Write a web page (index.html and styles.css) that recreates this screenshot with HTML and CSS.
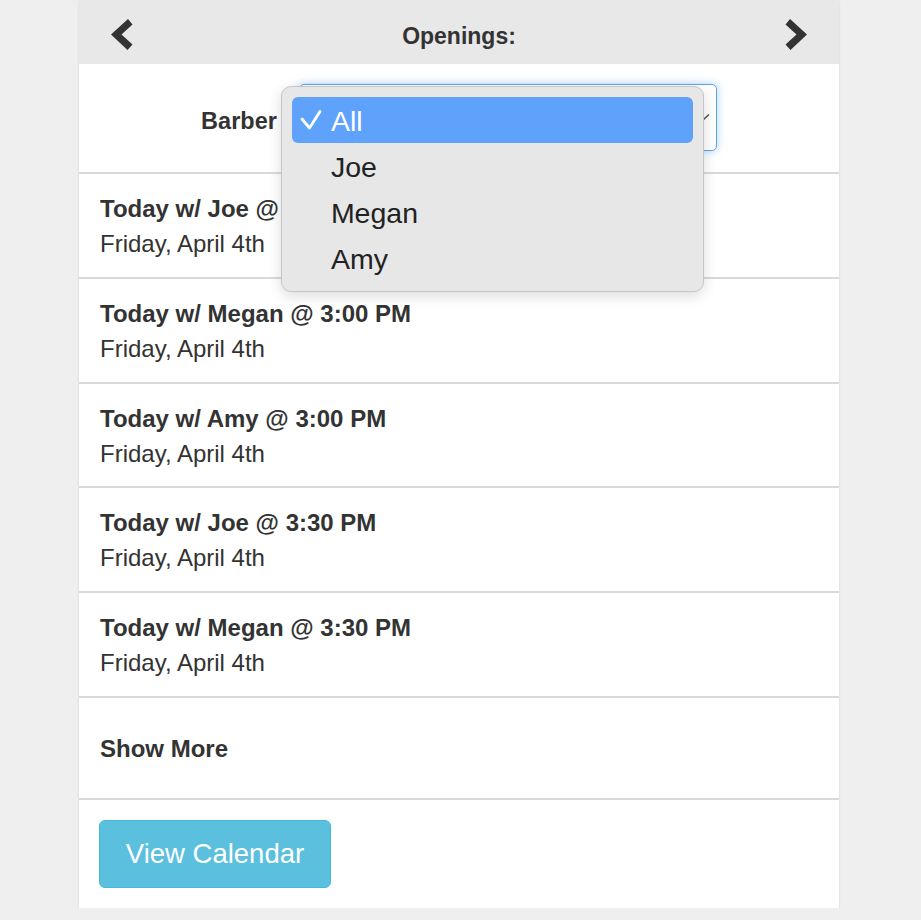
FILE: index.html
```html
<!DOCTYPE html>
<html>
<head>
<meta charset="utf-8">
<link rel="stylesheet" href="styles.css">
</head>
<body>
<div class="panel">
  <div class="header">
    <svg class="chev" width="26" height="35" viewBox="0 0 26 35"><polygon points="3,17.5 20,2 24.5,7.5 13.5,17.5 24.5,27.5 19.5,33" fill="#333"/></svg>
    <div class="title">Openings:</div>
    <svg class="chev" width="26" height="35" viewBox="0 0 26 35"><polygon points="23,17.5 6,2 1.5,7.5 12.5,17.5 1.5,27.5 6.5,33" fill="#333"/></svg>
  </div>
  <div class="filter">
    <label class="label">Barber</label>
    <div class="select">
      <svg class="caret" width="14" height="9" viewBox="0 0 14 9"><polyline points="1,1.5 7,7 13,1.5" fill="none" stroke="#555" stroke-width="1.6"/></svg>
      <div class="menu">
        <div class="opt active">
          <span class="check"><svg width="22" height="22" viewBox="0 0 22 22"><polyline points="2,10 9.5,19 20,2.5" fill="none" stroke="#fff" stroke-width="2.8" stroke-linecap="round" stroke-linejoin="round"/></svg></span><span class="name">All</span>
        </div>
        <div class="opt"><span class="check"></span><span class="name">Joe</span></div>
        <div class="opt"><span class="check"></span><span class="name">Megan</span></div>
        <div class="opt"><span class="check"></span><span class="name">Amy</span></div>
      </div>
    </div>
  </div>
  <div class="row">
    <div class="when">Today w/ Joe @</div>
    <div class="date">Friday, April 4th</div>
  </div>
  <div class="row">
    <div class="when">Today w/ Megan @ 3:00 PM</div>
    <div class="date">Friday, April 4th</div>
  </div>
  <div class="row">
    <div class="when">Today w/ Amy @ 3:00 PM</div>
    <div class="date">Friday, April 4th</div>
  </div>
  <div class="row">
    <div class="when">Today w/ Joe @ 3:30 PM</div>
    <div class="date">Friday, April 4th</div>
  </div>
  <div class="row">
    <div class="when">Today w/ Megan @ 3:30 PM</div>
    <div class="date">Friday, April 4th</div>
  </div>
  <div class="more">Show More</div>
  <div class="actions">
    <button class="btn">View Calendar</button>
  </div>
</div>
</body>
</html>
```

FILE: styles.css
```css
html, body {
  margin: 0;
  padding: 0;
  background: #efefef;
}
body {
  font-family: "Liberation Sans", Arial, Helvetica, sans-serif;
  color: #333;
}
.panel {
  width: 760px;
  margin-left: 79px;
  background: #fff;
  box-shadow: 0 1px 2px rgba(0,0,0,0.12);
}
.header {
  height: 64px;
  box-sizing: border-box;
  padding: 4px 29px 0 29px;
  background: #e8e8e8;
  display: flex;
  align-items: center;
  justify-content: space-between;
}
.chev {
  display: block;
}
.title {
  font-size: 23px;
  font-weight: bold;
  padding-top: 4px;
}
.filter {
  height: 110px;
  box-sizing: border-box;
  padding-top: 20px;
  display: flex;
  justify-content: center;
  align-items: flex-start;
  gap: 22px;
  border-bottom: 2px solid #d9d9d9;
}
.label {
  font-size: 23.5px;
  font-weight: bold;
  line-height: 67px;
  padding-top: 4px;
}
.select {
  position: relative;
  width: 418px;
  height: 67px;
  box-sizing: border-box;
  border: 1.5px solid #5ea5e6;
  border-radius: 5px;
  background: #fff;
  box-shadow: 0 0 9px rgba(102,175,233,0.55);
}
.caret {
  position: absolute;
  right: 6px;
  top: 28px;
}
.menu {
  position: absolute;
  left: -19px;
  top: 1px;
  width: 423px;
  box-sizing: border-box;
  padding: 10px;
  background: #e7e7e8;
  border: 1px solid #c6c6c8;
  border-radius: 10px;
  box-shadow: 0 4px 14px rgba(0,0,0,0.14);
  font-size: 28.5px;
  color: #222;
}
.opt {
  height: 46px;
  display: flex;
  align-items: center;
  border-radius: 6px;
}
.opt.active {
  background: #5fa2fc;
  color: #fff;
}
.name {
  padding-top: 3px;
}
.check {
  width: 39px;
  flex: none;
  display: flex;
  align-items: center;
  padding-left: 8px;
  box-sizing: border-box;
}
.check svg {
  display: block;
}
.row {
  height: 104.8px;
  box-sizing: border-box;
  padding: 17px 0 0 21px;
  border-bottom: 2px solid #d9d9d9;
  font-size: 24px;
  line-height: 35px;
}
.when {
  font-weight: bold;
}
.more {
  height: 102px;
  box-sizing: border-box;
  padding: 32px 0 0 21px;
  border-bottom: 2px solid #d9d9d9;
  font-size: 24px;
  line-height: 38px;
  font-weight: bold;
}
.actions {
  padding: 20px;
}
.btn {
  display: block;
  width: 232px;
  height: 68px;
  background: #5bc0de;
  border: 1.5px solid #46b8da;
  border-radius: 6px;
  color: #fff;
  font-family: "Liberation Sans", Arial, sans-serif;
  font-size: 27.5px;
  padding: 0;
  margin: 0;
}
```
